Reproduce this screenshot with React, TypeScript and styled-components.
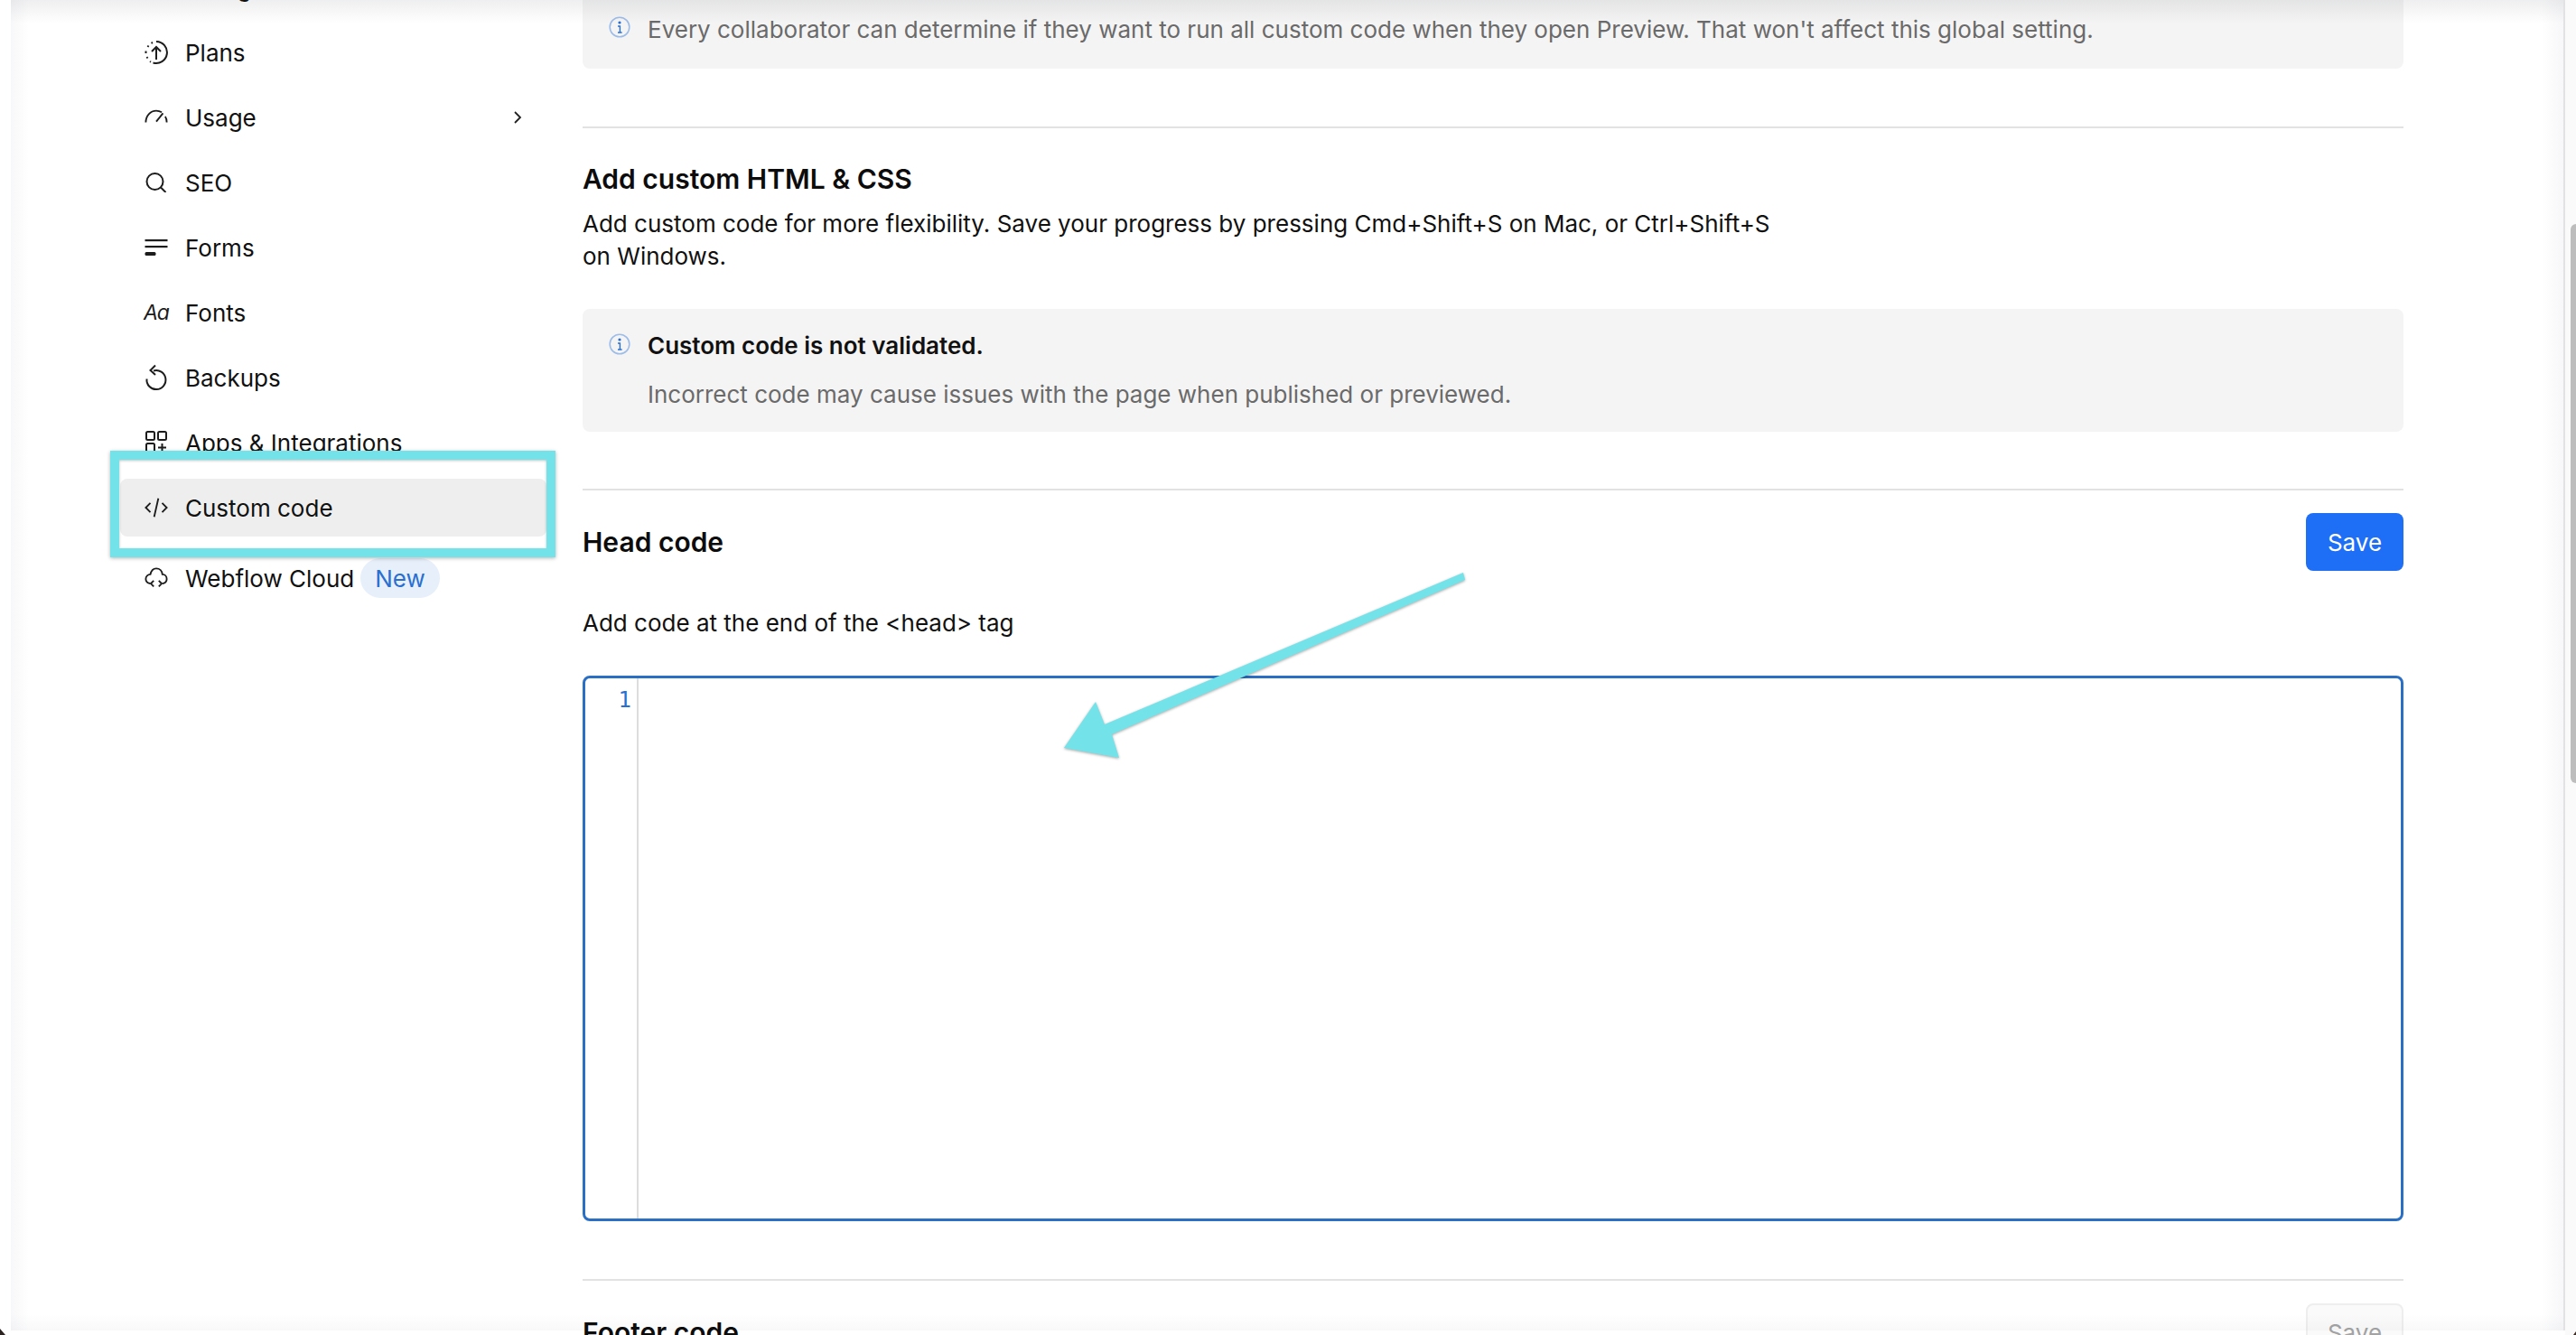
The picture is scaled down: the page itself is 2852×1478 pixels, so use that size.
import React from 'react';
import styled, { createGlobalStyle } from 'styled-components';

const GlobalStyle = createGlobalStyle`
  html, body {
    margin: 0;
    padding: 0;
    height: 100%;
    background: #fff;
    overflow: hidden;
  }
  * { box-sizing: border-box; }
`;

const cyan = '#74e3e9';

const Screen = styled.div`
  position: relative;
  display: flex;
  width: 2852px;
  height: 1478px;
  padding-left: 12px;
  overflow: hidden;
  font-family: Inter, "Liberation Sans", sans-serif;
  color: #111;
  background: #fff;
`;

const Frame = styled.div`
  position: relative;
  display: flex;
  width: 2828px;
  height: 1478px;
  overflow: hidden;
  background: #fff;
`;

// soft shadow of the window edges, lies over the content
const EdgeShade = styled.div`
  position: absolute;
  inset: 0 0 5px 0;
  pointer-events: none;
  border-right: 2px solid #e2e2e4;
  background:
    linear-gradient(to bottom, rgba(20, 24, 40, 0.07), rgba(20, 24, 40, 0) 26px),
    linear-gradient(to right, rgba(40, 50, 90, 0.035), rgba(40, 50, 90, 0) 20px),
    linear-gradient(to left, rgba(40, 50, 90, 0.04), rgba(40, 50, 90, 0) 24px),
    linear-gradient(to top, rgba(40, 50, 90, 0.03), rgba(40, 50, 90, 0) 18px);
`;

// rounded window corners of the dark desktop behind the page
const CornerLeft = styled.div`
  position: absolute;
  left: 0;
  bottom: 0;
  width: 6px;
  height: 7px;
  background: #2a2320;
  clip-path: polygon(0 0, 100% 100%, 0 100%);
`;

const CornerRight = styled.div`
  position: absolute;
  right: 0;
  bottom: 0;
  width: 3px;
  height: 4px;
  background: #3a2a22;
  clip-path: polygon(100% 0, 100% 100%, 0 100%);
`;

const Track = styled.div`
  flex: 1;
  height: 100%;
  padding: 248px 0 0 6px;
  background: #fafafb;
`;

const Thumb = styled.div`
  width: 6px;
  height: 619px;
  border-radius: 6px 0 0 6px;
  background: #bdbdbd;
`;

const Sidebar = styled.nav`
  flex: none;
  width: 633px;
  padding-left: 121px;
  margin-top: -46px;
`;

const NavList = styled.ul`
  list-style: none;
  width: 472px;
  margin: 0;
  padding: 0;
  display: flex;
  flex-direction: column;
  gap: 8px;
`;

const NavItem = styled.li<{ $active?: boolean; $pushed?: boolean }>`
  display: flex;
  align-items: center;
  height: 64px;
  padding: 0 27px 0 27px;
  margin-top: ${p => (p.$pushed ? '6px' : '0')};
  border-radius: 8px;
  font-size: 26px;
  background: ${p => (p.$active ? '#eeeeee' : 'transparent')};
`;

const NavIcon = styled.span`
  flex: none;
  display: flex;
  align-items: center;
  justify-content: center;
  width: 26px;
  height: 30px;
  margin-right: 19px;
  color: #1c1c1c;
`;

const FontGlyph = styled.span`
  font-size: 23px;
  font-style: italic;
  letter-spacing: -1px;
  white-space: nowrap;
`;

const NavLabel = styled.span`
  white-space: nowrap;
`;

const NavChevron = styled.svg`
  flex: none;
  width: 10px;
  height: 16px;
  margin-left: auto;
  fill: none;
  stroke: #222;
  stroke-width: 1.8;
`;

const NewBadge = styled.span`
  flex: none;
  display: flex;
  align-items: center;
  height: 44px;
  margin-left: 7px;
  padding: 0 16px;
  border-radius: 22px;
  font-size: 26px;
  color: #2a6fd0;
  background: #e7effb;
`;

const Main = styled.main`
  flex: none;
  width: 2016px;
`;

const Callout = styled.div<{ $clipped?: boolean }>`
  display: flex;
  align-items: flex-start;
  gap: 19px;
  height: ${p => (p.$clipped ? '96px' : '136px')};
  margin-top: ${p => (p.$clipped ? '-20px' : '0')};
  padding: ${p => (p.$clipped ? '36px' : '25px')} 29px 0;
  border-radius: 8px;
  background: #f4f4f4;
`;

const InfoIcon = styled.svg`
  flex: none;
  width: 24px;
  height: 26px;
  margin-top: 1px;
`;

const CalloutText = styled.div`
  display: flex;
  flex-direction: column;
  gap: 21px;
`;

const CalloutTitle = styled.div`
  font-size: 26px;
  line-height: 32px;
  font-weight: 600;
  color: #111;
`;

const CalloutBody = styled.div`
  font-size: 26px;
  line-height: 34px;
  color: #6a6a6a;
  white-space: nowrap;
`;

const Divider = styled.hr<{ $before: number; $after: number }>`
  height: 2px;
  border: 0;
  margin: ${p => p.$before}px 0 ${p => p.$after}px;
  background: #e2e2e2;
`;

const Heading = styled.h2`
  margin: 0;
  font-size: 30px;
  line-height: 38px;
  font-weight: 600;
  color: #0c0c0c;
`;

const Intro = styled.p`
  max-width: 1330px;
  margin: 13px 0 40px;
  font-size: 26px;
  line-height: 36px;
  color: #111;
`;

const FieldHint = styled.p`
  margin: 0 0 40px;
  font-size: 26px;
  line-height: 36px;
  color: #111;
`;

const HeadRow = styled.div`
  display: flex;
  align-items: center;
  justify-content: space-between;
  height: 64px;
  margin-bottom: 40px;
`;

const SaveButton = styled.button<{ $disabled?: boolean }>`
  width: 108px;
  height: 64px;
  padding: 0;
  border-radius: 8px;
  font-family: inherit;
  font-size: 26px;
  color: ${p => (p.$disabled ? '#a3a3a3' : '#fff')};
  background: ${p => (p.$disabled ? '#fafafa' : '#1e6ff5')};
  border: ${p => (p.$disabled ? '2px solid #eeeeee' : '0')};
`;

const Editor = styled.div`
  display: flex;
  height: 604px;
  border: 3px solid #2a6fc4;
  border-radius: 8px;
  background: #fff;
`;

const Gutter = styled.div`
  width: 59px;
  padding: 11px 6px 0 0;
  text-align: right;
  font-family: "DejaVu Sans Mono", "Liberation Mono", monospace;
  font-size: 24px;
  line-height: 26px;
  color: #2a6fd0;
  border-right: 2px solid #dddddd;
`;

const HighlightBox = styled.div`
  position: absolute;
  left: 122px;
  top: 499px;
  width: 493px;
  height: 118px;
  border: 10px solid ${cyan};
  box-shadow: 0 1px 4px rgba(0, 0, 0, 0.3), inset 0 1px 3px rgba(0, 0, 0, 0.25);
  pointer-events: none;
`;

const ArrowSvg = styled.svg`
  position: absolute;
  left: 1170px;
  top: 625px;
  width: 460px;
  height: 225px;
  overflow: visible;
  filter: drop-shadow(0 1px 1.5px rgba(0, 0, 0, 0.35));
`;

const Info = () => (
  <InfoIcon viewBox="0 0 24 26" fill="none">
    <circle cx="12" cy="13" r="10.8" stroke="#9dbce8" strokeWidth="1.6" />
    <circle cx="12" cy="8" r="1.6" fill="#2a6fd0" />
    <path d="M10 12h2.400v7M10 19h4.600" stroke="#2a6fd0" strokeWidth="1.4" />
  </InfoIcon>
);

const stroke = { fill: 'none', stroke: 'currentColor', strokeWidth: 2 };

const PlansIcon = () => (
  <svg width="26" height="28" viewBox="0 0 26 28" {...stroke}>
    <path d="M13 2a12 12 0 1 1-3.500 23.500" />
    <path d="M9 3 7.500 3.800M4.500 6.500 3.500 8M1.500 12.500v2.500M2.500 19l1 1.500M6 24l1 .6" />
    <path d="M13 22V8M8 13l5-5 5 5" />
  </svg>
);

const UsageIcon = () => (
  <svg width="28" height="18" viewBox="0 0 28 18" {...stroke}>
    <path d="M1.500 15C1.500 7 7 1 14 1c2.500 0 4.500.6 6.500 1.800" />
    <path d="M26.500 15c0-3-.5-5-1.800-7" />
    <path d="M14 14 22 4" />
  </svg>
);

const SeoIcon = () => (
  <svg width="24" height="22" viewBox="0 0 24 22" {...stroke}>
    <circle cx="10.500" cy="10" r="9" />
    <path d="m17 16.500 5.500 5.500" />
  </svg>
);

const FormsIcon = () => (
  <svg width="26" height="18" viewBox="0 0 26 18">
    <rect x="0.500" y="0" width="25" height="2.200" fill="currentColor" />
    <rect x="0.500" y="7" width="25" height="2.200" fill="currentColor" />
    <rect x="0.500" y="14" width="12" height="4" rx="1.500" fill="currentColor" />
  </svg>
);

const BackupsIcon = () => (
  <svg width="26" height="30" viewBox="0 0 26 30" {...stroke}>
    <path d="M10 7.500a10.500 10.500 0 1 1-7.500 9" />
    <path d="M12 1.500 6.500 7l5.500 5" />
  </svg>
);

const AppsIcon = () => (
  <svg width="26" height="28" viewBox="0 0 26 28" {...stroke}>
    <rect x="2" y="2" width="9" height="9" rx="1.500" />
    <rect x="15" y="2" width="9" height="9" rx="1.500" />
    <rect x="2" y="15" width="9" height="9" rx="1.500" />
    <path d="M19.500 15v9M15 19.500h9" />
  </svg>
);

const CodeIcon = () => (
  <svg width="28" height="28" viewBox="0 0 28 28" {...stroke}>
    <path d="M7 8.500 1.500 14 7 19.500M21 8.500l5.500 5.500-5.500 5.500M16.500 3 11.500 25" />
  </svg>
);

const CloudIcon = () => (
  <svg width="28" height="28" viewBox="0 0 28 28" {...stroke}>
    <path d="M7 20.500C3.500 20 1.500 17.500 1.500 15c0-3 2.500-5.500 5.500-5.500C8 5 11 2.500 14 2.500c4 0 7 3 7.300 7 3 0 5.200 2.400 5.200 5.500 0 2.700-2 5-5 5.500" />
    <path d="m11 17-3.500 3.500L11 24M17 17l3.500 3.500L17 24" />
  </svg>
);

export default function App() {
  return (
    <Screen>
      <GlobalStyle />
      <Frame>
        <Sidebar>
          <NavList>
            <NavItem>
              <NavIcon />
              <NavLabel>Billing</NavLabel>
            </NavItem>
            <NavItem>
              <NavIcon><PlansIcon /></NavIcon>
              <NavLabel>Plans</NavLabel>
            </NavItem>
            <NavItem>
              <NavIcon><UsageIcon /></NavIcon>
              <NavLabel>Usage</NavLabel>
              <NavChevron viewBox="0 0 10 16"><path d="m2 2 6 6-6 6" /></NavChevron>
            </NavItem>
            <NavItem>
              <NavIcon><SeoIcon /></NavIcon>
              <NavLabel>SEO</NavLabel>
            </NavItem>
            <NavItem>
              <NavIcon><FormsIcon /></NavIcon>
              <NavLabel>Forms</NavLabel>
            </NavItem>
            <NavItem>
              <NavIcon><FontGlyph>Aa</FontGlyph></NavIcon>
              <NavLabel>Fonts</NavLabel>
            </NavItem>
            <NavItem>
              <NavIcon><BackupsIcon /></NavIcon>
              <NavLabel>Backups</NavLabel>
            </NavItem>
            <NavItem>
              <NavIcon><AppsIcon /></NavIcon>
              <NavLabel>Apps &amp; Integrations</NavLabel>
            </NavItem>
            <NavItem $active>
              <NavIcon><CodeIcon /></NavIcon>
              <NavLabel>Custom code</NavLabel>
            </NavItem>
            <NavItem $pushed>
              <NavIcon><CloudIcon /></NavIcon>
              <NavLabel>Webflow Cloud</NavLabel>
              <NewBadge>New</NewBadge>
            </NavItem>
          </NavList>
        </Sidebar>
        <Main>
          <Callout $clipped>
            <Info />
            <CalloutBody>
              Every collaborator can determine if they want to run all custom code when they open Preview. That won't affect this global setting.
            </CalloutBody>
          </Callout>
          <Divider $before={64} $after={37} />
          <Heading>Add custom HTML &amp; CSS</Heading>
          <Intro>
            Add custom code for more flexibility. Save your progress by pressing Cmd+Shift+S on Mac, or Ctrl+Shift+S on Windows.
          </Intro>
          <Callout>
            <Info />
            <CalloutText>
              <CalloutTitle>Custom code is not validated.</CalloutTitle>
              <CalloutBody>Incorrect code may cause issues with the page when published or previewed.</CalloutBody>
            </CalloutText>
          </Callout>
          <Divider $before={63} $after={25} />
          <HeadRow>
            <Heading>Head code</Heading>
            <SaveButton>Save</SaveButton>
          </HeadRow>
          <FieldHint>Add code at the end of the &lt;head&gt; tag</FieldHint>
          <Editor>
            <Gutter>1</Gutter>
          </Editor>
          <Divider $before={64} $after={25} />
          <HeadRow>
            <Heading>Footer code</Heading>
            <SaveButton $disabled>Save</SaveButton>
          </HeadRow>
        </Main>
        <EdgeShade />
      </Frame>
      <Track>
        <Thumb />
      </Track>
      <HighlightBox />
      <ArrowSvg viewBox="1170 625 460 225">
        <polygon
          points="1620,634 1223,802 1213,777 1178,828 1239,839 1231,813 1622,642"
          fill={cyan}
        />
      </ArrowSvg>
      <CornerLeft />
      <CornerRight />
    </Screen>
  );
}
